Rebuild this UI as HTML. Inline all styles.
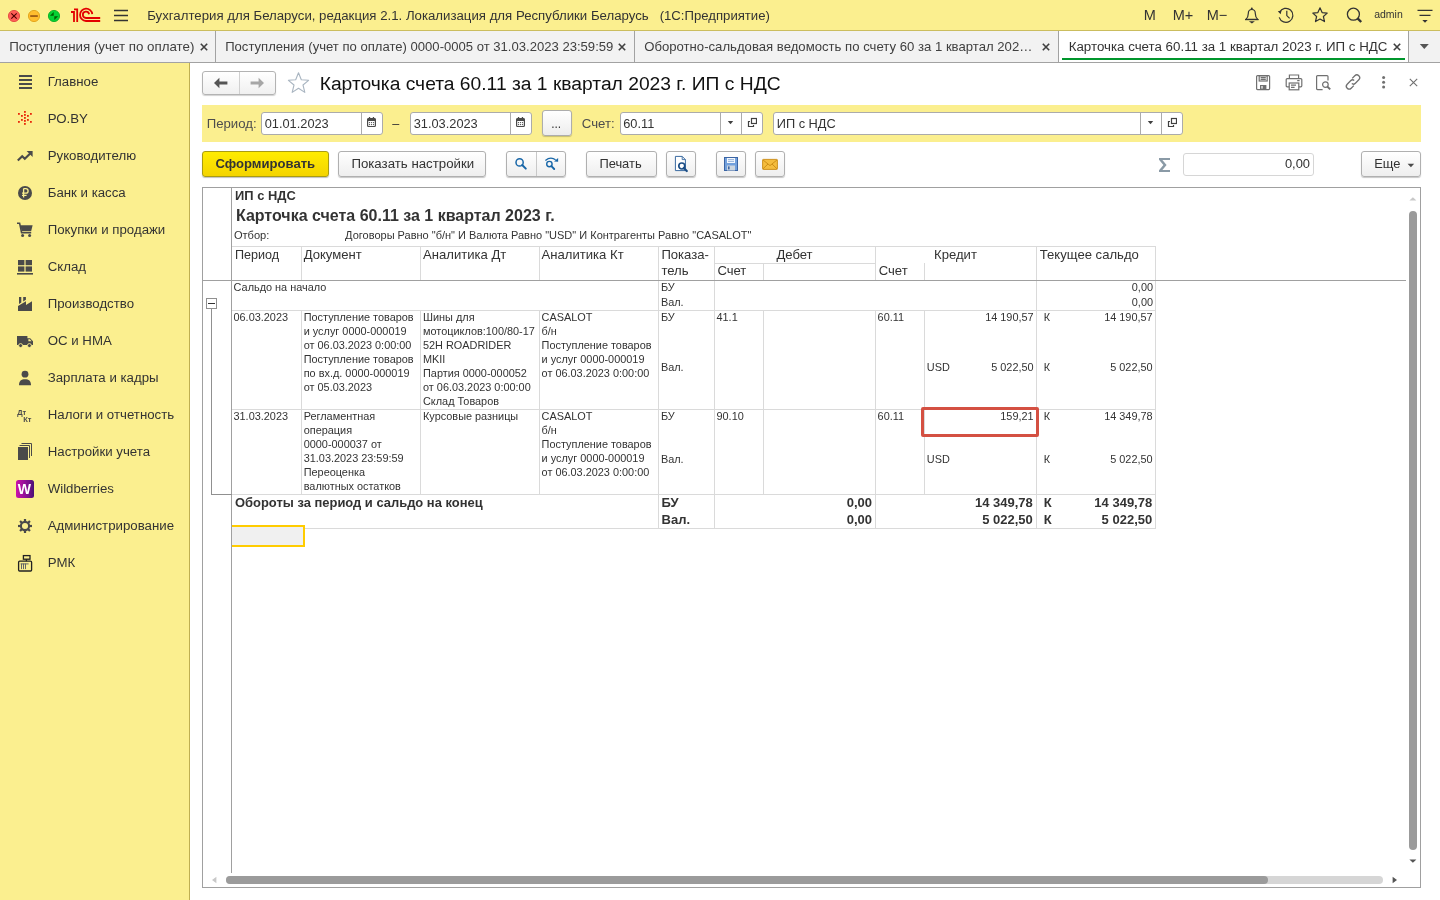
<!DOCTYPE html>
<html><head><meta charset="utf-8">
<style>
*{box-sizing:border-box;margin:0;padding:0}
html,body{width:1440px;height:900px;overflow:hidden;background:#fff;font-family:"Liberation Sans",sans-serif;color:#333}
.t{position:absolute;white-space:pre;line-height:normal}
.r{position:absolute;display:block}
</style></head><body>
<div id="root" style="position:absolute;left:0;top:0;width:1440px;height:900px;overflow:hidden;will-change:transform;background:#fff">

<div class="r" style="left:0px;top:0px;width:1440px;height:30px;background:#FBEF8F"></div>
<div class="r" style="left:0px;top:30px;width:1440px;height:1px;background:#CBBD5E"></div>
<svg class="r" style="left:0px;top:0px" width="66" height="30" viewBox="0 0 66 30">
<circle cx="14" cy="16" r="5.6" fill="#FF5F57" stroke="#E2463F" stroke-width="0.9"/>
<path d="M11.3 13.3 L16.7 18.7 M16.7 13.3 L11.3 18.7" stroke="#4D0000" stroke-width="1.1"/>
<circle cx="34" cy="16" r="5.6" fill="#FFBD2E" stroke="#E1A116" stroke-width="0.9"/>
<rect x="30.2" y="15.2" width="7.6" height="1.7" fill="#985712"/>
<circle cx="54" cy="16" r="5.6" fill="#05D234" stroke="#0AAE22" stroke-width="0.9"/>
<path d="M49.9 15.7 L53.7 11.9 L53.7 15.7 Z M58.1 16.3 L54.3 20.1 L54.3 16.3 Z" fill="#005F00"/>
</svg>
<svg class="r" style="left:66px;top:0px" width="40" height="30" viewBox="0 0 40 30">
<g fill="none" stroke="#E30000" stroke-width="1.8">
<path d="M5 12 L8 12 L8 22 M8 9.3 L11.2 9.3 L11.2 22"/>
<path d="M26.3 14.2 A6.15 6.15 0 1 0 20 21 L34.2 21"/>
<path d="M23.1 14.2 A3.15 3.15 0 1 0 20 18 L34.2 18"/>
</g></svg>
<svg class="r" style="left:110px;top:0px" width="24" height="30" viewBox="0 0 24 30"><g stroke="#333" stroke-width="1.3"><path d="M4 10.5H18M4 15.5H18M4 20.5H18"/></g></svg>
<div class="t" style="left:147.2px;top:8px;font-size:13.23px;color:#333;font-weight:normal;">Бухгалтерия для Беларуси, редакция 2.1. Локализация для Республики Беларусь</div>
<div class="t" style="left:659.7px;top:8px;font-size:13.15px;color:#333;font-weight:normal;">(1С:Предприятие)</div>
<div class="t" style="left:1143.7px;top:7px;font-size:14.5px;color:#333;font-weight:normal;">M</div>
<div class="t" style="left:1172.7px;top:7px;font-size:14.5px;color:#333;font-weight:normal;">M+</div>
<div class="t" style="left:1206.7px;top:7px;font-size:14.5px;color:#333;font-weight:normal;">M−</div>
<svg class="r" style="left:1244px;top:6px" width="16" height="18" viewBox="0 0 16 18"><g fill="none" stroke="#333" stroke-width="1.2"><path d="M1.8 13.4 C3.6 11.8 4.3 10 4.3 7.4 C4.3 5 5.6 3.5 7.8 3.5 C10 3.5 11.3 5 11.3 7.4 C11.3 10 12 11.8 13.8 13.4 Z" stroke-linejoin="round"/></g><path d="M1 13.0 H14.6 V14.2 H1 Z" fill="#333"/><circle cx="7.8" cy="2.6" r="1" fill="#333"/><path d="M4.9 15.3 H10.9 L7.9 17.4 Z" fill="#333"/></svg>
<svg class="r" style="left:1277px;top:6px" width="18" height="18" viewBox="0 0 18 18"><g fill="none" stroke="#333" stroke-width="1.2">
<path d="M2.6 6.2 A7 7 0 1 1 2.2 11.4"/><path d="M9.8 4.8 V9.6 L12.6 12.4"/></g>
<path d="M0.8 5.2 L4.6 4.4 L3.6 8.2 Z" fill="#333"/></svg>
<svg class="r" style="left:1311px;top:6px" width="18" height="18" viewBox="0 0 18 18"><path d="M9 1.8 L11.1 6.6 L16.2 7.1 L12.4 10.5 L13.5 15.6 L9 13 L4.5 15.6 L5.6 10.5 L1.8 7.1 L6.9 6.6 Z" fill="none" stroke="#333" stroke-width="1.2" stroke-linejoin="round"/></svg>
<svg class="r" style="left:1346px;top:6px" width="18" height="18" viewBox="0 0 18 18"><circle cx="7.4" cy="8.2" r="6" fill="none" stroke="#333" stroke-width="1.3"/><path d="M11.6 12.4 L15.2 16" stroke="#333" stroke-width="2.4"/></svg>
<div class="t" style="left:1374.2px;top:8px;font-size:10.5px;color:#333;font-weight:normal;">admin</div>
<svg class="r" style="left:1416px;top:6px" width="18" height="18" viewBox="0 0 18 18"><path d="M1.5 4.3H16.5M3.5 9.3H14.5" stroke="#333" stroke-width="1.2"/><path d="M6.3 14 H11.7 L9 16.8 Z" fill="#333"/></svg>
<div class="r" style="left:0px;top:31px;width:1440px;height:31px;background:#F2F2F2"></div>
<div class="r" style="left:0px;top:62px;width:1440px;height:1px;background:#A2A2A2"></div>
<div class="t" style="left:9.2px;top:39px;font-size:13.33px;color:#404040;font-weight:normal;">Поступления (учет по оплате)</div>
<svg class="r" style="left:200px;top:43px" width="8" height="8" viewBox="0 0 8 8"><path d="M0.8 0.8 L7.2 7.2 M7.2 0.8 L0.8 7.2" stroke="#404040" stroke-width="1.6"/></svg>
<div class="r" style="left:215px;top:31px;width:1px;height:31px;background:#A2A2A2"></div>
<div class="t" style="left:225.2px;top:39px;font-size:13.08px;color:#404040;font-weight:normal;">Поступления (учет по оплате) 0000-0005 от 31.03.2023 23:59:59</div>
<svg class="r" style="left:618px;top:43px" width="8" height="8" viewBox="0 0 8 8"><path d="M0.8 0.8 L7.2 7.2 M7.2 0.8 L0.8 7.2" stroke="#404040" stroke-width="1.6"/></svg>
<div class="r" style="left:634px;top:31px;width:1px;height:31px;background:#A2A2A2"></div>
<div class="t" style="left:644.2px;top:39px;font-size:13.15px;color:#404040;font-weight:normal;">Оборотно-сальдовая ведомость по счету 60 за 1 квартал 202…</div>
<svg class="r" style="left:1042px;top:43px" width="8" height="8" viewBox="0 0 8 8"><path d="M0.8 0.8 L7.2 7.2 M7.2 0.8 L0.8 7.2" stroke="#404040" stroke-width="1.6"/></svg>
<div class="r" style="left:1058px;top:31px;width:1px;height:31px;background:#A2A2A2"></div>
<div class="r" style="left:1059px;top:31px;width:349px;height:31px;background:#fff"></div>
<div class="t" style="left:1068.7px;top:39px;font-size:13.32px;color:#333;font-weight:normal;">Карточка счета 60.11 за 1 квартал 2023 г. ИП с НДС</div>
<svg class="r" style="left:1392.5px;top:43px" width="8" height="8" viewBox="0 0 8 8"><path d="M0.8 0.8 L7.2 7.2 M7.2 0.8 L0.8 7.2" stroke="#404040" stroke-width="1.6"/></svg>
<div class="r" style="left:1062px;top:58px;width:343px;height:2px;background:#00962C"></div>
<div class="r" style="left:1408px;top:31px;width:1px;height:31px;background:#A2A2A2"></div>
<svg class="r" style="left:1419px;top:43px" width="11" height="7" viewBox="0 0 11 7"><path d="M0.8 1 H9.8 L5.3 6 Z" fill="#555"/></svg>
<div class="r" style="left:0px;top:63px;width:189px;height:837px;background:#FBEF8F"></div>
<div class="r" style="left:189px;top:63px;width:1px;height:837px;background:#BFAF52"></div>
<div class="t" style="left:47.7px;top:74px;font-size:13.25px;color:#333;font-weight:normal;">Главное</div>
<div class="t" style="left:47.7px;top:111px;font-size:13.25px;color:#333;font-weight:normal;">РО.BY</div>
<div class="t" style="left:47.7px;top:148px;font-size:13.25px;color:#333;font-weight:normal;">Руководителю</div>
<div class="t" style="left:47.7px;top:185px;font-size:13.25px;color:#333;font-weight:normal;">Банк и касса</div>
<div class="t" style="left:47.7px;top:222px;font-size:13.25px;color:#333;font-weight:normal;">Покупки и продажи</div>
<div class="t" style="left:47.7px;top:259px;font-size:13.25px;color:#333;font-weight:normal;">Склад</div>
<div class="t" style="left:47.7px;top:296px;font-size:13.25px;color:#333;font-weight:normal;">Производство</div>
<div class="t" style="left:47.7px;top:333px;font-size:13.25px;color:#333;font-weight:normal;">ОС и НМА</div>
<div class="t" style="left:47.7px;top:370px;font-size:13.25px;color:#333;font-weight:normal;">Зарплата и кадры</div>
<div class="t" style="left:47.7px;top:407px;font-size:13.25px;color:#333;font-weight:normal;">Налоги и отчетность</div>
<div class="t" style="left:47.7px;top:444px;font-size:13.25px;color:#333;font-weight:normal;">Настройки учета</div>
<div class="t" style="left:47.7px;top:481px;font-size:13.25px;color:#333;font-weight:normal;">Wildberries</div>
<div class="t" style="left:47.7px;top:518px;font-size:13.25px;color:#333;font-weight:normal;">Администрирование</div>
<div class="t" style="left:47.7px;top:555px;font-size:13.25px;color:#333;font-weight:normal;">РМК</div>
<svg class="r" style="left:18px;top:74px" width="16" height="16" viewBox="0 0 16 16"><g fill="#4A4A4A"><rect x="1" y="1" width="13" height="2"/><rect x="1" y="5" width="13" height="2"/><rect x="1" y="9" width="13" height="2"/><rect x="1" y="13" width="13" height="2"/></g></svg>
<svg class="r" style="left:16px;top:110px" width="18" height="16" viewBox="0 0 18 16"><rect x="8" y="1" width="1.8" height="1.8" fill="#E8290B"/><rect x="2" y="3" width="1.8" height="1.8" fill="#E8290B"/><rect x="14" y="3" width="1.8" height="1.8" fill="#E8290B"/><rect x="5" y="5" width="1.8" height="1.8" fill="#E8290B"/><rect x="8" y="4" width="1.8" height="1.8" fill="#E8290B"/><rect x="11" y="5" width="1.8" height="1.8" fill="#E8290B"/><rect x="8" y="7" width="1.8" height="1.8" fill="#E8290B"/><rect x="5" y="9" width="1.8" height="1.8" fill="#E8290B"/><rect x="11" y="9" width="1.8" height="1.8" fill="#E8290B"/><rect x="8" y="10" width="1.8" height="1.8" fill="#E8290B"/><rect x="2" y="11" width="1.8" height="1.8" fill="#E8290B"/><rect x="14" y="11" width="1.8" height="1.8" fill="#E8290B"/><rect x="8" y="13" width="1.8" height="1.8" fill="#E8290B"/></svg>
<svg class="r" style="left:16px;top:148px" width="18" height="16" viewBox="0 0 18 16"><path d="M1.8 12.6 L6.2 8.2 L8.8 10.8 L14.2 5.4" fill="none" stroke="#4A4A4A" stroke-width="2.1"/><path d="M10.6 3 H16.6 V9 Z" fill="#4A4A4A"/></svg>
<svg class="r" style="left:16px;top:184px" width="18" height="18" viewBox="0 0 18 18"><circle cx="9" cy="9" r="7" fill="#4A4A4A"/><path d="M7.6 4.6 V13.6 M6 11.3 H10.6 M7.6 4.6 H9.8 A2.3 2.3 0 0 1 9.8 9.2 H6" fill="none" stroke="#FBEF8F" stroke-width="1.3"/></svg>
<svg class="r" style="left:16px;top:222px" width="18" height="16" viewBox="0 0 18 16"><path d="M1 1.2 H3.6 L5.6 10.6 H15.2" fill="none" stroke="#4A4A4A" stroke-width="1.6"/><path d="M4.4 3.2 H16.6 L15.2 9 H5.6 Z" fill="#4A4A4A"/><circle cx="6.6" cy="13.4" r="1.5" fill="#4A4A4A"/><circle cx="13.6" cy="13.4" r="1.5" fill="#4A4A4A"/></svg>
<svg class="r" style="left:16px;top:258px" width="18" height="18" viewBox="0 0 18 18"><g fill="#4A4A4A"><rect x="2" y="2" width="6.4" height="5.2"/><rect x="9.6" y="2" width="6.4" height="5.2"/><rect x="2" y="8.4" width="6.4" height="5.2"/><rect x="9.6" y="8.4" width="6.4" height="5.2"/><rect x="1" y="15" width="16" height="1.6"/></g></svg>
<svg class="r" style="left:16px;top:295px" width="18" height="18" viewBox="0 0 18 18"><path d="M2 16 V11 L10 6.3 V10 L16 6.3 V16 Z M3 2 H5.3 V7.56 L3 8.9 Z M7.2 2 H9.9 V4.86 L7.2 6.45 Z" fill="#4A4A4A"/></svg>
<svg class="r" style="left:16px;top:333px" width="18" height="16" viewBox="0 0 18 16"><path d="M1 3 H11.4 V5.2 H14.2 L17 8.2 V12 H1 Z" fill="#4A4A4A"/><circle cx="4.6" cy="12.6" r="2" fill="#4A4A4A" stroke="#FBEF8F" stroke-width="0.9"/><circle cx="13.4" cy="12.6" r="2" fill="#4A4A4A" stroke="#FBEF8F" stroke-width="0.9"/><path d="M12.4 6.3 H13.8 L15.6 8.2 H12.4 Z" fill="#FBEF8F"/></svg>
<svg class="r" style="left:16px;top:369px" width="18" height="18" viewBox="0 0 18 18"><circle cx="9" cy="5.2" r="3.4" fill="#4A4A4A"/><path d="M3 16.2 C3 11.8 5.2 10.2 9 10.2 C12.8 10.2 15 11.8 15 16.2 Z" fill="#4A4A4A"/></svg>
<div class="t" style="left:17.2px;top:408px;font-size:7.5px;color:#4A4A4A;font-weight:bold;">Дт</div>
<div class="t" style="left:23.2px;top:415px;font-size:7.5px;color:#4A4A4A;font-weight:bold;">Кт</div>
<svg class="r" style="left:16px;top:442px" width="18" height="20" viewBox="0 0 18 20"><rect x="2" y="5" width="10" height="13" fill="#4A4A4A"/><path d="M3.5 3.5 H13.5 V16 M5.5 1.5 H15.5 V14" fill="none" stroke="#4A4A4A" stroke-width="1"/></svg>
<div class="r" style="left:16px;top:480px;width:18px;height:18px;border-radius:2.5px;background:linear-gradient(90deg,#CB11AB,#7A0F8E 70%,#481173)"></div>
<div class="t" style="left:17.8px;top:481px;font-size:14px;color:#fff;font-weight:bold;">W</div>
<svg class="r" style="left:16px;top:517px" width="18" height="18" viewBox="0 0 18 18"><rect x="7.9" y="2" width="2.2" height="3" transform="rotate(0 9 9)" fill="#4A4A4A"/><rect x="7.9" y="2" width="2.2" height="3" transform="rotate(45 9 9)" fill="#4A4A4A"/><rect x="7.9" y="2" width="2.2" height="3" transform="rotate(90 9 9)" fill="#4A4A4A"/><rect x="7.9" y="2" width="2.2" height="3" transform="rotate(135 9 9)" fill="#4A4A4A"/><rect x="7.9" y="2" width="2.2" height="3" transform="rotate(180 9 9)" fill="#4A4A4A"/><rect x="7.9" y="2" width="2.2" height="3" transform="rotate(225 9 9)" fill="#4A4A4A"/><rect x="7.9" y="2" width="2.2" height="3" transform="rotate(270 9 9)" fill="#4A4A4A"/><rect x="7.9" y="2" width="2.2" height="3" transform="rotate(315 9 9)" fill="#4A4A4A"/><circle cx="9" cy="9" r="4.1" fill="none" stroke="#4A4A4A" stroke-width="2.1"/></svg>
<svg class="r" style="left:16px;top:553px" width="18" height="20" viewBox="0 0 18 20"><g fill="none" stroke="#222" stroke-width="1.3"><rect x="2.6" y="8.2" width="13" height="9.8" rx="1"/><rect x="7.4" y="2.6" width="6.6" height="3.6"/><path d="M10.4 6.2 V8.2"/></g><g fill="#666"><rect x="5" y="10.6" width="1" height="5.5"/><rect x="7" y="10.6" width="1" height="5.5"/><rect x="9" y="10.6" width="1" height="5.5"/><rect x="4.6" y="10.4" width="8" height="1"/></g></svg>
<div class="r" style="left:202px;top:71px;width:74px;height:24px;border:1px solid #B3B3B3;border-radius:3px;background:linear-gradient(#FFFFFF,#F0F0F0);box-shadow:0 1px 1px rgba(0,0,0,0.18)"></div>
<div class="r" style="left:239px;top:72px;width:1px;height:22px;background:#D0D0D0"></div>
<svg class="r" style="left:212px;top:76px" width="18" height="14" viewBox="0 0 18 14"><path d="M2 7 L7.4 1.8 V5.6 H15.4 V8.4 H7.4 V12.2 Z" fill="#555"/></svg>
<svg class="r" style="left:248px;top:76px" width="18" height="14" viewBox="0 0 18 14"><path d="M16 7 L10.6 1.8 V5.6 H2.6 V8.4 H10.6 V12.2 Z" fill="#A6A6A6"/></svg>
<svg class="r" style="left:286px;top:71px" width="25" height="24" viewBox="0 0 25 24"><path d="M12.5 1.8 L15.3 8.8 L22.6 9.3 L17 14 L18.8 21.4 L12.5 17.3 L6.2 21.4 L8 14 L2.4 9.3 L9.7 8.8 Z" fill="none" stroke="#A9B5C1" stroke-width="1.1" stroke-linejoin="round"/></svg>
<div class="t" style="left:319.7px;top:73px;font-size:19.26px;color:#111;font-weight:normal;">Карточка счета 60.11 за 1 квартал 2023 г. ИП с НДС</div>
<svg class="r" style="left:1255px;top:74px" width="17" height="17" viewBox="0 0 17 17"><g fill="none" stroke="#707070" stroke-width="1.2"><path d="M1.6 2.6 Q1.6 1.6 2.6 1.6 H13.6 Q14.6 1.6 14.6 2.6 V14.6 Q14.6 15.6 13.6 15.6 H2.6 Q1.6 15.6 1.6 14.6 Z"/><rect x="4.2" y="1.8" width="8" height="5.2"/><path d="M5.6 3.7 H10.8 M5.6 5.3 H10.8"/></g><rect x="5" y="11" width="6.4" height="4.6" fill="#707070"/><rect x="6.4" y="12" width="1.2" height="2.6" fill="#fff"/></svg>
<svg class="r" style="left:1285px;top:73px" width="18" height="18" viewBox="0 0 18 18"><g fill="none" stroke="#707070" stroke-width="1.2"><path d="M4.4 5.6 V2 H13.6 V5.6"/><path d="M4.2 13.8 H2.2 Q1.2 13.8 1.2 12.8 V6.6 Q1.2 5.6 2.2 5.6 H15.8 Q16.8 5.6 16.8 6.6 V12.8 Q16.8 13.8 15.8 13.8 H13.8"/><rect x="4.2" y="10" width="9.6" height="6.8"/><path d="M6 12.2 H11 M6 14.4 H9.6 M12.2 7.6 H14.6"/></g></svg>
<svg class="r" style="left:1315px;top:74px" width="18" height="18" viewBox="0 0 18 18"><g fill="none" stroke="#707070" stroke-width="1.2"><path d="M7.6 15.6 H2.6 Q1.6 15.6 1.6 14.6 V2.6 Q1.6 1.6 2.6 1.6 H12 Q13 1.6 13 2.6 V6.4"/><circle cx="10.4" cy="10.6" r="2.8"/></g><path d="M12.4 12.6 L15.2 15.4" stroke="#707070" stroke-width="2"/></svg>
<svg class="r" style="left:1344px;top:73px" width="18" height="18" viewBox="0 0 18 18"><g fill="none" stroke="#707070" stroke-width="1.3"><path d="M8.2 5.4 L10.8 2.8 Q12.8 0.8 14.8 2.8 Q16.8 4.8 14.8 6.8 L11.4 10.2 Q9.6 12 7.8 10.6"/><path d="M9.8 12.6 L7.2 15.2 Q5.2 17.2 3.2 15.2 Q1.2 13.2 3.2 11.2 L6.6 7.8 Q8.4 6 10.2 7.4"/></g></svg>
<svg class="r" style="left:1380px;top:74px" width="8" height="16" viewBox="0 0 8 16"><g fill="#707070"><circle cx="3.6" cy="3.6" r="1.5"/><circle cx="3.6" cy="8.3" r="1.5"/><circle cx="3.6" cy="13" r="1.5"/></g></svg>
<svg class="r" style="left:1408px;top:77px" width="11" height="11" viewBox="0 0 11 11"><path d="M1.8 1.8 L9.2 9.2 M9.2 1.8 L1.8 9.2" stroke="#707070" stroke-width="1.1"/></svg>
<div class="r" style="left:202px;top:105px;width:1219px;height:37px;background:#FBEF8F"></div>
<div class="t" style="left:206.7px;top:116px;font-size:13.2px;color:#4D4D4D;font-weight:normal;">Период:</div>
<div class="r" style="left:261px;top:112px;width:122px;height:23px;border:1px solid #ABABAB;border-radius:3px;background:#fff"></div>
<div class="r" style="left:361px;top:113px;width:1px;height:21px;background:#ABABAB"></div>
<svg class="r" style="left:366px;top:116px" width="12" height="13" viewBox="0 0 12 13"><rect x="1.6" y="2.6" width="7.8" height="7.9" rx="1" fill="none" stroke="#4A4A4A" stroke-width="1.2"/><rect x="1.6" y="2.4" width="7.8" height="2.6" fill="#4A4A4A"/><rect x="2.9" y="1" width="1.3" height="2.2" fill="#4A4A4A"/><rect x="6.8" y="1" width="1.3" height="2.2" fill="#4A4A4A"/><g fill="#4A4A4A"><circle cx="3.5" cy="6.6" r="0.65"/><circle cx="5.5" cy="6.6" r="0.65"/><circle cx="7.5" cy="6.6" r="0.65"/><circle cx="3.5" cy="8.6" r="0.65"/><circle cx="5.5" cy="8.6" r="0.65"/><circle cx="7.5" cy="8.6" r="0.65"/></g></svg>
<div class="t" style="left:264.7px;top:116px;font-size:12.8px;color:#333;font-weight:normal;">01.01.2023</div>
<div class="t" style="left:392.2px;top:117px;font-size:12.6px;color:#333;font-weight:normal;">–</div>
<div class="r" style="left:410px;top:112px;width:122px;height:23px;border:1px solid #ABABAB;border-radius:3px;background:#fff"></div>
<div class="r" style="left:510px;top:113px;width:1px;height:21px;background:#ABABAB"></div>
<svg class="r" style="left:515px;top:116px" width="12" height="13" viewBox="0 0 12 13"><rect x="1.6" y="2.6" width="7.8" height="7.9" rx="1" fill="none" stroke="#4A4A4A" stroke-width="1.2"/><rect x="1.6" y="2.4" width="7.8" height="2.6" fill="#4A4A4A"/><rect x="2.9" y="1" width="1.3" height="2.2" fill="#4A4A4A"/><rect x="6.8" y="1" width="1.3" height="2.2" fill="#4A4A4A"/><g fill="#4A4A4A"><circle cx="3.5" cy="6.6" r="0.65"/><circle cx="5.5" cy="6.6" r="0.65"/><circle cx="7.5" cy="6.6" r="0.65"/><circle cx="3.5" cy="8.6" r="0.65"/><circle cx="5.5" cy="8.6" r="0.65"/><circle cx="7.5" cy="8.6" r="0.65"/></g></svg>
<div class="t" style="left:413.7px;top:116px;font-size:12.8px;color:#333;font-weight:normal;">31.03.2023</div>
<div class="r" style="left:542px;top:110px;width:30px;height:26px;border:1px solid #ADADAD;border-radius:3px;background:linear-gradient(#FFFFFF,#EDEDED);box-shadow:0 1px 1px rgba(0,0,0,0.2)"></div>
<div class="t" style="left:551.2px;top:117px;font-size:12px;color:#333;font-weight:normal;">...</div>
<div class="t" style="left:581.8px;top:116px;font-size:13.2px;color:#4D4D4D;font-weight:normal;">Счет:</div>
<div class="r" style="left:620px;top:112px;width:143px;height:23px;border:1px solid #ABABAB;border-radius:3px;background:#fff"></div>
<div class="r" style="left:720px;top:113px;width:1px;height:21px;background:#ABABAB"></div>
<div class="r" style="left:741px;top:113px;width:1px;height:21px;background:#ABABAB"></div>
<svg class="r" style="left:726px;top:118px" width="10" height="8" viewBox="0 0 10 8"><path d="M1.8 3 H7.2 L4.5 6.2 Z" fill="#404040"/></svg>
<svg class="r" style="left:745px;top:117px" width="12" height="12" viewBox="0 0 12 12"><g fill="none" stroke="#404040" stroke-width="1.2"><rect x="6.5" y="1.5" width="5" height="5"/><path d="M5 4.5 H3.5 V9.5 H8.5 V8"/></g></svg>
<div class="t" style="left:623.2px;top:116px;font-size:12.8px;color:#333;font-weight:normal;">60.11</div>
<div class="r" style="left:773px;top:112px;width:410px;height:23px;border:1px solid #ABABAB;border-radius:3px;background:#fff"></div>
<div class="r" style="left:1140px;top:113px;width:1px;height:21px;background:#ABABAB"></div>
<div class="r" style="left:1161px;top:113px;width:1px;height:21px;background:#ABABAB"></div>
<svg class="r" style="left:1146px;top:118px" width="10" height="8" viewBox="0 0 10 8"><path d="M1.8 3 H7.2 L4.5 6.2 Z" fill="#404040"/></svg>
<svg class="r" style="left:1165px;top:117px" width="12" height="12" viewBox="0 0 12 12"><g fill="none" stroke="#404040" stroke-width="1.2"><rect x="6.5" y="1.5" width="5" height="5"/><path d="M5 4.5 H3.5 V9.5 H8.5 V8"/></g></svg>
<div class="t" style="left:776.7px;top:116px;font-size:12.8px;color:#333;font-weight:normal;">ИП с НДС</div>
<div class="r" style="left:202px;top:151px;width:127px;height:26px;border:1px solid #A99C12;border-radius:3px;background:linear-gradient(#FFEC00,#F4D400);box-shadow:0 1px 1px rgba(0,0,0,0.25)"></div>
<div class="t" style="left:215.4px;top:156px;font-size:13.1px;color:#333;font-weight:bold;">Сформировать</div>
<div class="r" style="left:338px;top:151px;width:148px;height:26px;border:1px solid #B0B0B0;border-radius:3px;background:linear-gradient(#FFFFFF,#EEEEEE);box-shadow:0 1px 1px rgba(0,0,0,0.22)"></div>
<div class="t" style="left:351.4px;top:156px;font-size:13.25px;color:#333;font-weight:normal;">Показать настройки</div>
<div class="r" style="left:506px;top:151px;width:60px;height:26px;border:1px solid #B0B0B0;border-radius:3px;background:linear-gradient(#FFFFFF,#EEEEEE);box-shadow:0 1px 1px rgba(0,0,0,0.22)"></div>
<div class="r" style="left:536px;top:152px;width:1px;height:24px;background:#C8C8C8"></div>
<svg class="r" style="left:513px;top:155px" width="18" height="18" viewBox="0 0 18 18"><circle cx="6.6" cy="7.4" r="3.6" fill="none" stroke="#1766A8" stroke-width="1.5"/><path d="M9.2 10 L12.8 13.6" stroke="#1766A8" stroke-width="2" stroke-linecap="round"/></svg>
<svg class="r" style="left:543px;top:155px" width="18" height="18" viewBox="0 0 18 18"><circle cx="6.4" cy="9.1" r="2.7" fill="none" stroke="#1766A8" stroke-width="1.4"/><path d="M8.4 11.1 L11.2 14" stroke="#1766A8" stroke-width="1.9" stroke-linecap="round"/><path d="M2.4 5.4 Q7.6 1.2 12.6 4.8" fill="none" stroke="#1766A8" stroke-width="1.3"/><path d="M11 6.6 L15.1 2.9 L15.1 6.8 Z" fill="#1766A8"/></svg>
<div class="r" style="left:586px;top:151px;width:71px;height:26px;border:1px solid #B0B0B0;border-radius:3px;background:linear-gradient(#FFFFFF,#EEEEEE);box-shadow:0 1px 1px rgba(0,0,0,0.22)"></div>
<div class="t" style="left:599.4px;top:156px;font-size:12.9px;color:#333;font-weight:normal;">Печать</div>
<div class="r" style="left:666px;top:151px;width:30px;height:26px;border:1px solid #B0B0B0;border-radius:3px;background:linear-gradient(#FFFFFF,#EEEEEE);box-shadow:0 1px 1px rgba(0,0,0,0.22)"></div>
<svg class="r" style="left:671px;top:154px" width="20" height="20" viewBox="0 0 20 20"><path d="M4.4 2.4 H11.2 L14.4 5.6 V16.6 H4.4 Z" fill="#fff" stroke="#3A6AA0" stroke-width="1"/><path d="M11.2 2.4 V5.6 H14.4" fill="none" stroke="#3A6AA0" stroke-width="0.9"/><circle cx="10.8" cy="12" r="3" fill="#fff" stroke="#1C4E86" stroke-width="1.7"/><path d="M12.8 14 L15.8 17" stroke="#1C4E86" stroke-width="2.2" stroke-linecap="round"/></svg>
<div class="r" style="left:716px;top:151px;width:30px;height:26px;border:1px solid #B0B0B0;border-radius:3px;background:linear-gradient(#FFFFFF,#EEEEEE);box-shadow:0 1px 1px rgba(0,0,0,0.22)"></div>
<svg class="r" style="left:721px;top:154px" width="20" height="20" viewBox="0 0 20 20"><rect x="3.5" y="3.5" width="13" height="13" fill="#72A0DC" stroke="#3A64A4" stroke-width="1"/><rect x="6" y="4" width="8" height="5" fill="#F4F8FD"/><path d="M7 5.6 H13 M7 7.4 H13" stroke="#7FA2D2" stroke-width="0.8"/><rect x="6" y="11.5" width="8" height="5" fill="#CDD6DF"/><rect x="7" y="12.4" width="1.6" height="3" fill="#3A64A4"/></svg>
<div class="r" style="left:755px;top:151px;width:30px;height:26px;border:1px solid #B0B0B0;border-radius:3px;background:linear-gradient(#FFFFFF,#EEEEEE);box-shadow:0 1px 1px rgba(0,0,0,0.22)"></div>
<svg class="r" style="left:760px;top:154px" width="20" height="20" viewBox="0 0 20 20"><rect x="2.6" y="5.4" width="14.8" height="10" rx="0.8" fill="#F5BD3D" stroke="#C98A12" stroke-width="0.9"/><path d="M2.8 5.8 L10 11.6 L17.2 5.8 M2.8 15 L8 10 M17.2 15 L12 10" fill="none" stroke="#C98A12" stroke-width="0.9"/></svg>
<svg class="r" style="left:1156px;top:155px" width="18" height="20" viewBox="0 0 18 20"><path d="M3 3 H14 V5 H6.4 L10.6 10 L6.4 15 H14 V17 H3 V15.2 L7.4 10 L3 4.8 Z" fill="#8A9AA6"/></svg>
<div class="r" style="left:1183px;top:153px;width:131px;height:23px;border:1px solid #D6D6D6;border-radius:3px;background:#fff"></div>
<div class="t" style="right:130px;top:156px;font-size:12.9px;color:#333;font-weight:normal;">0,00</div>
<div class="r" style="left:1361px;top:151px;width:60px;height:26px;border:1px solid #B0B0B0;border-radius:3px;background:linear-gradient(#FFFFFF,#EEEEEE);box-shadow:0 1px 1px rgba(0,0,0,0.22)"></div>
<div class="t" style="left:1374.2px;top:156px;font-size:12.9px;color:#333;font-weight:normal;">Еще</div>
<svg class="r" style="left:1407px;top:163px" width="8" height="5" viewBox="0 0 8 5"><path d="M0.6 0.8 H7.2 L3.9 4.2 Z" fill="#4A4A4A"/></svg>
<div class="r" style="left:202px;top:187px;width:1219px;height:701px;border:1px solid #A0A0A0;background:#fff"></div>
<div class="r" style="left:231px;top:188px;width:1px;height:685px;background:#A0A0A0"></div>
<div class="r" style="left:203px;top:280px;width:1203px;height:1px;background:#A0A0A0"></div>
<div class="r" style="left:232px;top:246px;width:924px;height:1px;background:#DADADA"></div>
<div class="r" style="left:714px;top:263px;width:161px;height:1px;background:#DADADA"></div>
<div class="r" style="left:301px;top:246px;width:1px;height:34px;background:#DADADA"></div>
<div class="r" style="left:420px;top:246px;width:1px;height:34px;background:#DADADA"></div>
<div class="r" style="left:539px;top:246px;width:1px;height:34px;background:#DADADA"></div>
<div class="r" style="left:658px;top:246px;width:1px;height:34px;background:#DADADA"></div>
<div class="r" style="left:714px;top:246px;width:1px;height:34px;background:#DADADA"></div>
<div class="r" style="left:875px;top:246px;width:1px;height:34px;background:#DADADA"></div>
<div class="r" style="left:1036px;top:246px;width:1px;height:34px;background:#DADADA"></div>
<div class="r" style="left:1155px;top:246px;width:1px;height:34px;background:#DADADA"></div>
<div class="r" style="left:763px;top:263px;width:1px;height:17px;background:#DADADA"></div>
<div class="r" style="left:924px;top:263px;width:1px;height:17px;background:#DADADA"></div>
<div class="t" style="left:235.0px;top:248px;font-size:12.6px;color:#333;font-weight:normal;">Период</div>
<div class="t" style="left:303.7px;top:247px;font-size:13.1px;color:#333;font-weight:normal;">Документ</div>
<div class="t" style="left:423.0px;top:247px;font-size:13.1px;color:#333;font-weight:normal;">Аналитика Дт</div>
<div class="t" style="left:541.6px;top:247px;font-size:13.1px;color:#333;font-weight:normal;">Аналитика Кт</div>
<div class="t" style="left:661.4px;top:247px;font-size:13.1px;color:#333;font-weight:normal;">Показа-</div>
<div class="t" style="left:661.4px;top:263px;font-size:13.1px;color:#333;font-weight:normal;">тель</div>
<div class="t" style="left:494.5px;width:600px;text-align:center;top:247px;font-size:13.1px;color:#333;font-weight:normal;">Дебет</div>
<div class="t" style="left:655.5px;width:600px;text-align:center;top:247px;font-size:13.1px;color:#333;font-weight:normal;">Кредит</div>
<div class="t" style="left:1039.8px;top:247px;font-size:13.1px;color:#333;font-weight:normal;">Текущее сальдо</div>
<div class="t" style="left:717.4px;top:263px;font-size:13.1px;color:#333;font-weight:normal;">Счет</div>
<div class="t" style="left:878.7px;top:263px;font-size:13.1px;color:#333;font-weight:normal;">Счет</div>
<div class="t" style="left:235.1px;top:188px;font-size:12.9px;color:#333;font-weight:bold;">ИП с НДС</div>
<div class="t" style="left:235.95px;top:207px;font-size:16px;color:#333;font-weight:bold;">Карточка счета 60.11 за 1 квартал 2023 г.</div>
<div class="t" style="left:233.9px;top:229px;font-size:11.1px;color:#333;font-weight:normal;">Отбор:</div>
<div class="t" style="left:345.1px;top:229px;font-size:11.0px;color:#333;font-weight:normal;">Договоры Равно &quot;б/н&quot; И Валюта Равно &quot;USD&quot; И Контрагенты Равно &quot;CASALOT&quot;</div>
<div class="r" style="left:658px;top:281px;width:1px;height:29px;background:#DADADA"></div>
<div class="r" style="left:714px;top:281px;width:1px;height:29px;background:#DADADA"></div>
<div class="r" style="left:1036px;top:281px;width:1px;height:29px;background:#DADADA"></div>
<div class="r" style="left:1155px;top:281px;width:1px;height:29px;background:#DADADA"></div>
<div class="r" style="left:232px;top:310px;width:924px;height:1px;background:#DADADA"></div>
<div class="t" style="left:233.6px;top:281px;font-size:10.9px;color:#333;font-weight:normal;">Сальдо на начало</div>
<div class="t" style="left:660.9px;top:281px;font-size:10.9px;color:#333;font-weight:normal;">БУ</div>
<div class="t" style="left:660.9px;top:296px;font-size:10.9px;color:#333;font-weight:normal;">Вал.</div>
<div class="t" style="right:287px;top:281px;font-size:10.9px;color:#333;font-weight:normal;">0,00</div>
<div class="t" style="right:287px;top:296px;font-size:10.9px;color:#333;font-weight:normal;">0,00</div>
<div class="r" style="left:301px;top:311px;width:1px;height:183px;background:#DADADA"></div>
<div class="r" style="left:420px;top:311px;width:1px;height:183px;background:#DADADA"></div>
<div class="r" style="left:539px;top:311px;width:1px;height:183px;background:#DADADA"></div>
<div class="r" style="left:658px;top:311px;width:1px;height:183px;background:#DADADA"></div>
<div class="r" style="left:714px;top:311px;width:1px;height:183px;background:#DADADA"></div>
<div class="r" style="left:763px;top:311px;width:1px;height:183px;background:#DADADA"></div>
<div class="r" style="left:875px;top:311px;width:1px;height:183px;background:#DADADA"></div>
<div class="r" style="left:924px;top:311px;width:1px;height:183px;background:#DADADA"></div>
<div class="r" style="left:1036px;top:311px;width:1px;height:183px;background:#DADADA"></div>
<div class="r" style="left:1155px;top:311px;width:1px;height:183px;background:#DADADA"></div>
<div class="r" style="left:232px;top:409px;width:924px;height:1px;background:#DADADA"></div>
<div class="r" style="left:232px;top:494px;width:924px;height:1px;background:#DADADA"></div>
<div class="t" style="left:233.5px;top:311px;font-size:10.9px;color:#333;font-weight:normal;">06.03.2023</div>
<div class="t" style="left:303.7px;top:311px;font-size:10.9px;color:#333;font-weight:normal;">Поступление товаров</div>
<div class="t" style="left:303.7px;top:325px;font-size:10.9px;color:#333;font-weight:normal;">и услуг 0000-000019</div>
<div class="t" style="left:303.7px;top:339px;font-size:10.9px;color:#333;font-weight:normal;">от 06.03.2023 0:00:00</div>
<div class="t" style="left:303.7px;top:353px;font-size:10.9px;color:#333;font-weight:normal;">Поступление товаров</div>
<div class="t" style="left:303.7px;top:367px;font-size:10.9px;color:#333;font-weight:normal;">по вх.д. 0000-000019</div>
<div class="t" style="left:303.7px;top:381px;font-size:10.9px;color:#333;font-weight:normal;">от 05.03.2023</div>
<div class="t" style="left:423.0px;top:311px;font-size:10.9px;color:#333;font-weight:normal;">Шины для</div>
<div class="t" style="left:423.0px;top:325px;font-size:10.9px;color:#333;font-weight:normal;">мотоциклов:100/80-17</div>
<div class="t" style="left:423.0px;top:339px;font-size:10.9px;color:#333;font-weight:normal;">52H ROADRIDER</div>
<div class="t" style="left:423.0px;top:353px;font-size:10.9px;color:#333;font-weight:normal;">MKII</div>
<div class="t" style="left:423.0px;top:367px;font-size:10.9px;color:#333;font-weight:normal;">Партия 0000-000052</div>
<div class="t" style="left:423.0px;top:381px;font-size:10.9px;color:#333;font-weight:normal;">от 06.03.2023 0:00:00</div>
<div class="t" style="left:423.0px;top:395px;font-size:10.9px;color:#333;font-weight:normal;">Склад Товаров</div>
<div class="t" style="left:541.6px;top:311px;font-size:10.9px;color:#333;font-weight:normal;">CASALOT</div>
<div class="t" style="left:541.6px;top:325px;font-size:10.9px;color:#333;font-weight:normal;">б/н</div>
<div class="t" style="left:541.6px;top:339px;font-size:10.9px;color:#333;font-weight:normal;">Поступление товаров</div>
<div class="t" style="left:541.6px;top:353px;font-size:10.9px;color:#333;font-weight:normal;">и услуг 0000-000019</div>
<div class="t" style="left:541.6px;top:367px;font-size:10.9px;color:#333;font-weight:normal;">от 06.03.2023 0:00:00</div>
<div class="t" style="left:660.9px;top:311px;font-size:10.9px;color:#333;font-weight:normal;">БУ</div>
<div class="t" style="left:660.9px;top:361px;font-size:10.9px;color:#333;font-weight:normal;">Вал.</div>
<div class="t" style="left:716.5px;top:311px;font-size:10.9px;color:#333;font-weight:normal;">41.1</div>
<div class="t" style="left:877.6px;top:311px;font-size:10.9px;color:#333;font-weight:normal;">60.11</div>
<div class="t" style="right:406.4000000000001px;top:311px;font-size:10.9px;color:#333;font-weight:normal;">14 190,57</div>
<div class="t" style="left:926.8px;top:361px;font-size:10.9px;color:#333;font-weight:normal;">USD</div>
<div class="t" style="right:406.4000000000001px;top:361px;font-size:10.9px;color:#333;font-weight:normal;">5 022,50</div>
<div class="t" style="left:1043.7px;top:311px;font-size:10.9px;color:#333;font-weight:normal;">К</div>
<div class="t" style="left:1043.7px;top:361px;font-size:10.9px;color:#333;font-weight:normal;">К</div>
<div class="t" style="right:287.4000000000001px;top:311px;font-size:10.9px;color:#333;font-weight:normal;">14 190,57</div>
<div class="t" style="right:287.4000000000001px;top:361px;font-size:10.9px;color:#333;font-weight:normal;">5 022,50</div>
<div class="t" style="left:233.5px;top:410px;font-size:10.9px;color:#333;font-weight:normal;">31.03.2023</div>
<div class="t" style="left:303.7px;top:410px;font-size:10.9px;color:#333;font-weight:normal;">Регламентная</div>
<div class="t" style="left:303.7px;top:424px;font-size:10.9px;color:#333;font-weight:normal;">операция</div>
<div class="t" style="left:303.7px;top:438px;font-size:10.9px;color:#333;font-weight:normal;">0000-000037 от</div>
<div class="t" style="left:303.7px;top:452px;font-size:10.9px;color:#333;font-weight:normal;">31.03.2023 23:59:59</div>
<div class="t" style="left:303.7px;top:466px;font-size:10.9px;color:#333;font-weight:normal;">Переоценка</div>
<div class="t" style="left:303.7px;top:480px;font-size:10.9px;color:#333;font-weight:normal;">валютных остатков</div>
<div class="t" style="left:423.0px;top:410px;font-size:10.9px;color:#333;font-weight:normal;">Курсовые разницы</div>
<div class="t" style="left:541.6px;top:410px;font-size:10.9px;color:#333;font-weight:normal;">CASALOT</div>
<div class="t" style="left:541.6px;top:424px;font-size:10.9px;color:#333;font-weight:normal;">б/н</div>
<div class="t" style="left:541.6px;top:438px;font-size:10.9px;color:#333;font-weight:normal;">Поступление товаров</div>
<div class="t" style="left:541.6px;top:452px;font-size:10.9px;color:#333;font-weight:normal;">и услуг 0000-000019</div>
<div class="t" style="left:541.6px;top:466px;font-size:10.9px;color:#333;font-weight:normal;">от 06.03.2023 0:00:00</div>
<div class="t" style="left:660.9px;top:410px;font-size:10.9px;color:#333;font-weight:normal;">БУ</div>
<div class="t" style="left:660.9px;top:453px;font-size:10.9px;color:#333;font-weight:normal;">Вал.</div>
<div class="t" style="left:716.5px;top:410px;font-size:10.9px;color:#333;font-weight:normal;">90.10</div>
<div class="t" style="left:877.6px;top:410px;font-size:10.9px;color:#333;font-weight:normal;">60.11</div>
<div class="t" style="right:406.4000000000001px;top:410px;font-size:10.9px;color:#333;font-weight:normal;">159,21</div>
<div class="t" style="left:926.8px;top:453px;font-size:10.9px;color:#333;font-weight:normal;">USD</div>
<div class="t" style="left:1043.7px;top:410px;font-size:10.9px;color:#333;font-weight:normal;">К</div>
<div class="t" style="left:1043.7px;top:453px;font-size:10.9px;color:#333;font-weight:normal;">К</div>
<div class="t" style="right:287.4000000000001px;top:410px;font-size:10.9px;color:#333;font-weight:normal;">14 349,78</div>
<div class="t" style="right:287.4000000000001px;top:453px;font-size:10.9px;color:#333;font-weight:normal;">5 022,50</div>
<div class="r" style="left:921px;top:407px;width:118px;height:30px;border:3px solid #D45042;border-radius:2px"></div>
<div class="r" style="left:658px;top:495px;width:1px;height:33px;background:#DADADA"></div>
<div class="r" style="left:714px;top:495px;width:1px;height:33px;background:#DADADA"></div>
<div class="r" style="left:875px;top:495px;width:1px;height:33px;background:#DADADA"></div>
<div class="r" style="left:1036px;top:495px;width:1px;height:33px;background:#DADADA"></div>
<div class="r" style="left:1155px;top:495px;width:1px;height:33px;background:#DADADA"></div>
<div class="r" style="left:232px;top:528px;width:924px;height:1px;background:#DADADA"></div>
<div class="t" style="left:235.0px;top:495px;font-size:12.94px;color:#333;font-weight:bold;">Обороты за период и сальдо на конец</div>
<div class="t" style="left:661.6px;top:495px;font-size:13.0px;color:#333;font-weight:bold;">БУ</div>
<div class="t" style="left:661.6px;top:512px;font-size:13.0px;color:#333;font-weight:bold;">Вал.</div>
<div class="t" style="right:568px;top:495px;font-size:13.0px;color:#333;font-weight:bold;">0,00</div>
<div class="t" style="right:568px;top:512px;font-size:13.0px;color:#333;font-weight:bold;">0,00</div>
<div class="t" style="right:407.20000000000005px;top:495px;font-size:13.0px;color:#333;font-weight:bold;">14 349,78</div>
<div class="t" style="right:407.20000000000005px;top:512px;font-size:13.0px;color:#333;font-weight:bold;">5 022,50</div>
<div class="t" style="left:1043.7px;top:495px;font-size:13.0px;color:#333;font-weight:bold;">К</div>
<div class="t" style="left:1043.7px;top:512px;font-size:13.0px;color:#333;font-weight:bold;">К</div>
<div class="t" style="right:287.79999999999995px;top:495px;font-size:13.0px;color:#333;font-weight:bold;">14 349,78</div>
<div class="t" style="right:287.79999999999995px;top:512px;font-size:13.0px;color:#333;font-weight:bold;">5 022,50</div>
<div class="r" style="left:206px;top:298px;width:11px;height:11px;border:1px solid #909090;background:#fff"></div>
<div class="r" style="left:208px;top:303px;width:7px;height:1px;background:#333"></div>
<div class="r" style="left:211px;top:309px;width:1px;height:186px;background:#909090"></div>
<div class="r" style="left:211px;top:494px;width:21px;height:1px;background:#909090"></div>
<div class="r" style="left:232px;top:525px;width:73px;height:22px;border:2px solid #FFCC00;border-left:none;background:#F0F0F0"></div>
<div class="r" style="left:231px;top:525px;width:1px;height:22px;background:#A0A0A0"></div>
<div class="r" style="left:305px;top:528px;width:851px;height:1px;background:#DADADA"></div>
<svg class="r" style="left:1407px;top:194px" width="12" height="8" viewBox="0 0 12 8"><path d="M2.4 6.6 H9.4 L5.9 3.2 Z" fill="#C8C8C8"/></svg>
<div class="r" style="left:1409px;top:211px;width:8px;height:639px;border-radius:4px;background:#9B9B9B"></div>
<svg class="r" style="left:1407px;top:857px" width="12" height="8" viewBox="0 0 12 8"><path d="M2.4 2.4 H9.4 L5.9 5.8 Z" fill="#555"/></svg>
<div class="r" style="left:226px;top:876px;width:1157px;height:8px;border-radius:4px;background:#D6D6D6"></div>
<div class="r" style="left:226px;top:876px;width:1042px;height:8px;border-radius:4px;background:#9B9B9B"></div>
<svg class="r" style="left:208px;top:874px" width="10" height="12" viewBox="0 0 10 12"><path d="M8.4 2.8 V9.2 L4 6 Z" fill="#C8C8C8"/></svg>
<svg class="r" style="left:1390px;top:874px" width="10" height="12" viewBox="0 0 10 12"><path d="M2.6 2.8 V9.2 L7 6 Z" fill="#555"/></svg>
</div></body></html>
